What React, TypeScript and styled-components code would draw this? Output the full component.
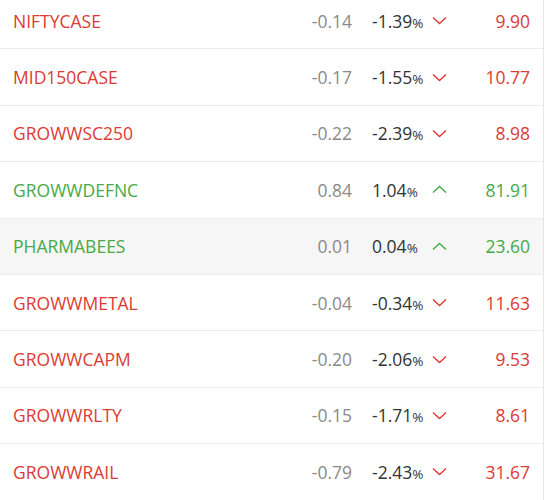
import React from "react";
import styled, { createGlobalStyle } from "styled-components";

const GlobalStyle = createGlobalStyle`
  html, body { margin: 0; padding: 0; background: #fff; }
  body { font-family: "Open Sans", "Liberation Sans", sans-serif; overflow: hidden; }
`;

const RED = "#dc3a34";
const GREEN = "#47a947";

const List = styled.div`
  width: 543px;
  border-right: 1px solid #e6e6e6;
  margin-top: -7px;
`;

const Row = styled.div<{ $highlight?: boolean }>`
  display: grid;
  grid-template-columns: 1fr 90px 72px 28px 78px;
  align-items: center;
  height: 55.4px;
  padding: 0 13px;
  border-bottom: 1px solid #ececec;
  background: ${(p) => (p.$highlight ? "#f6f6f6" : "#fff")};
  font-size: 17.5px;
`;

const Symbol = styled.div<{ $up: boolean }>`
  color: ${(p) => (p.$up ? GREEN : RED)};
`;

const Change = styled.div`
  color: #8a8a8a;
  text-align: right;
`;

const Percent = styled.div`
  color: #333;
  padding-left: 20px;
  white-space: nowrap;
  span {
    font-size: 13.5px;
  }
`;

const Arrow = styled.div`
  display: flex;
  align-items: center;
  padding-left: 8px;
`;

const Price = styled.div<{ $up: boolean }>`
  color: ${(p) => (p.$up ? GREEN : RED)};
  text-align: right;
`;

const Chevron = ({ up }: { up: boolean }) => (
  <svg width="15" height="9" viewBox="0 0 15 9">
    <path
      d={up ? "M1 7.5 L7.5 1.5 L14 7.5" : "M1 1.5 L7.5 7.5 L14 1.5"}
      fill="none"
      stroke={up ? GREEN : RED}
      strokeWidth="1.4"
    />
  </svg>
);

const rows = [
  { name: "NIFTYCASE", change: "-0.14", pct: "-1.39", price: "9.90" },
  { name: "MID150CASE", change: "-0.17", pct: "-1.55", price: "10.77" },
  { name: "GROWWSC250", change: "-0.22", pct: "-2.39", price: "8.98" },
  { name: "GROWWDEFNC", change: "0.84", pct: "1.04", price: "81.91" },
  { name: "PHARMABEES", change: "0.01", pct: "0.04", price: "23.60", highlight: true },
  { name: "GROWWMETAL", change: "-0.04", pct: "-0.34", price: "11.63" },
  { name: "GROWWCAPM", change: "-0.20", pct: "-2.06", price: "9.53" },
  { name: "GROWWRLTY", change: "-0.15", pct: "-1.71", price: "8.61" },
  { name: "GROWWRAIL", change: "-0.79", pct: "-2.43", price: "31.67" },
];

export default function App() {
  return (
    <>
      <GlobalStyle />
      <List>
        {rows.map((r) => {
          const up = !r.change.startsWith("-");
          return (
            <Row key={r.name} $highlight={r.highlight}>
              <Symbol $up={up}>{r.name}</Symbol>
              <Change>{r.change}</Change>
              <Percent>
                {r.pct}
                <span>%</span>
              </Percent>
              <Arrow>
                <Chevron up={up} />
              </Arrow>
              <Price $up={up}>{r.price}</Price>
            </Row>
          );
        })}
      </List>
    </>
  );
}
